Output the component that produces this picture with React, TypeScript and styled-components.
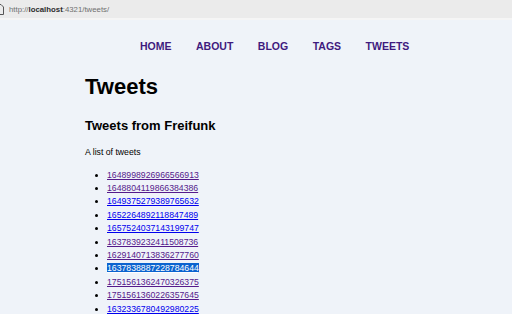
import styled, { createGlobalStyle } from 'styled-components';

const GlobalStyle = createGlobalStyle`
  html, body { margin: 0; padding: 0; background: #eff3f9; }
  body { font-family: "Liberation Sans", Arial, sans-serif; color: #000; }
`;

const AddressBar = styled.div`
  height: 18px;
  background: #ebebeb;
  border-bottom: 2px solid #f5f5f5;
  display: flex;
  align-items: center;
  gap: 4px;
  overflow: hidden;
  font-size: 7.8px;
  color: #707070;
`;

const PageIcon = styled.svg`
  margin-left: -5px;
  flex: none;
`;

const Host = styled.span`
  color: #2b2b2b;
  font-weight: 700;
`;

const Nav = styled.nav`
  display: flex;
  gap: 24.5px;
  padding: 0 0 0 140px;
  margin-top: 20px;
  line-height: 12px;
`;

const NavLink = styled.a`
  font-size: 10.5px;
  font-weight: 700;
  color: #3f1a7e;
  text-decoration: none;
  text-transform: uppercase;
`;

const Main = styled.main`
  padding-left: 85px;
`;

const Title = styled.h1`
  margin: 22px 0 0;
  font-size: 22px;
  line-height: 26px;
  font-weight: 700;
`;

const Subtitle = styled.h2`
  margin: 17.5px 0 0;
  font-size: 13px;
  line-height: 16px;
  font-weight: 700;
`;

const Intro = styled.p`
  margin: 13.5px 0 0;
  font-size: 8.7px;
  line-height: 10px;
`;

const TweetList = styled.ul`
  margin: 11.5px 0 0;
  padding-left: 22px;
  font-size: 8.7px;
  line-height: 13.4px;
`;

const TweetLink = styled.a<{ $visited?: boolean; $selected?: boolean }>`
  color: ${(p) => (p.$selected ? '#fff' : p.$visited ? '#551a8b' : '#0000ee')};
  background: ${(p) => (p.$selected ? '#0b63cf' : 'transparent')};
  text-decoration: underline;
`;

const tweets = [
  { id: '1648998926966566913', visited: true },
  { id: '1648804119866384386', visited: true },
  { id: '1649375279389765632', visited: false },
  { id: '1652264892118847489', visited: false },
  { id: '1657524037143199747', visited: false },
  { id: '1637839232411508736', visited: true },
  { id: '1629140713836277760', visited: true },
  { id: '1637838887228784644', visited: true, selected: true },
  { id: '1751561362470326375', visited: true },
  { id: '1751561360226357645', visited: true },
  { id: '1632336780492980225', visited: false },
];

const navItems = ['Home', 'About', 'Blog', 'Tags', 'Tweets'];

export default function App() {
  return (
    <>
      <GlobalStyle />
      <AddressBar>
        <PageIcon width="10" height="11" viewBox="0 0 10 11">
          <path d="M1.5 0.5h4.5l2.5 2.5v7.5h-7z" fill="none" stroke="#555" strokeWidth="1" />
        </PageIcon>
        <span>
          http://<Host>localhost</Host>:4321/tweets/
        </span>
      </AddressBar>
      <Nav>
        {navItems.map((n) => (
          <NavLink key={n} href="#">{n}</NavLink>
        ))}
      </Nav>
      <Main>
        <Title>Tweets</Title>
        <Subtitle>Tweets from Freifunk</Subtitle>
        <Intro>A list of tweets</Intro>
        <TweetList>
          {tweets.map((t) => (
            <li key={t.id}>
              <TweetLink href="#" $visited={t.visited} $selected={t.selected}>
                {t.id}
              </TweetLink>
            </li>
          ))}
        </TweetList>
      </Main>
    </>
  );
}
